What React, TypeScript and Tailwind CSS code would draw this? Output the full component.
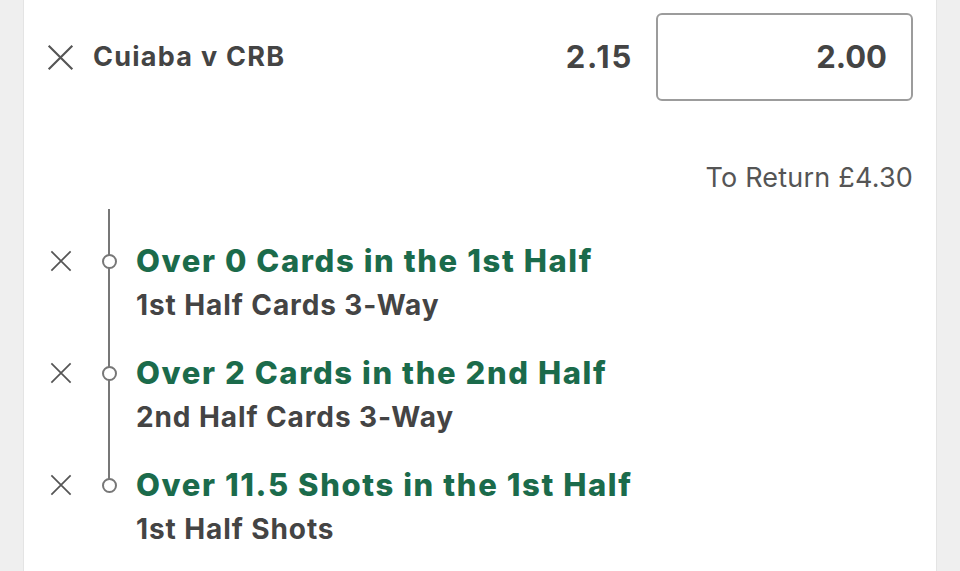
const legs = [
  { title: 'Over 0 Cards in the 1st Half', market: '1st Half Cards 3-Way' },
  { title: 'Over 2 Cards in the 2nd Half', market: '2nd Half Cards 3-Way' },
  { title: 'Over 11.5 Shots in the 1st Half', market: '1st Half Shots' },
]

function Cross({ size }: { size: number }) {
  return (
    <svg width={size} height={size} viewBox="0 0 24 24" fill="none" stroke="#555" strokeWidth={1.9}>
      <path d="M1.5 1.5 22.5 22.5M22.5 1.5 1.5 22.5" />
    </svg>
  )
}

export default function App() {
  return (
    <div
      className="flex h-[571px] w-[960px] overflow-hidden bg-[#efefef]"
      style={{ fontFamily: 'Inter, "Noto Sans", sans-serif' }}
    >
      <div className="w-[24px] shrink-0 border-r border-[#e4e4e4]" />
      <div className="flex-1 bg-white">
        {/* selection header */}
        <div className="flex items-center pl-[23px] pr-[23px] pt-[13px]">
          <Cross size={27} />
          <span className="ml-[19px] text-[27px] font-bold tracking-[1.25px] text-[#444]">Cuiaba v CRB</span>
          <span className="ml-auto text-[31px] font-bold tracking-[1.75px] text-[#444]">2.15</span>
          <div className="ml-[23px] flex h-[88px] w-[257px] items-center justify-end rounded-[6px] border-2 border-[#9c9c9c] pr-[24px]">
            <span className="text-[31px] font-bold text-[#444]">2.00</span>
          </div>
        </div>

        <div className="mt-[60px] pr-[23px] text-right text-[27px] leading-[34px] tracking-[0.2px] text-[#555]">
          To Return £4.30
        </div>

        {/* bet builder legs */}
        <div className="relative mt-[14px] pt-[30px]">
          <div className="absolute left-[84px] top-0 h-[276px] w-[2px] bg-[#777]" />
          {legs.map((leg) => (
            <div key={leg.title} className="flex h-[112px]">
              <div className="flex h-[44px] w-[74px] items-center justify-center">
                <Cross size={22} />
              </div>
              <div className="flex h-[44px] w-[22px] items-center justify-center">
                <div className="relative h-[15px] w-[15px] rounded-full border-2 border-[#777] bg-white" />
              </div>
              <div className="ml-[16px]">
                <div className="text-[31px] font-extrabold leading-[44px] tracking-[1.6px] text-[#1b6b4b]">{leg.title}</div>
                <div className="text-[28px] font-bold leading-[44px] tracking-[0.9px] text-[#444]">{leg.market}</div>
              </div>
            </div>
          ))}
        </div>
      </div>
      <div className="w-[24px] shrink-0 border-l border-[#e4e4e4]" />
    </div>
  )
}
